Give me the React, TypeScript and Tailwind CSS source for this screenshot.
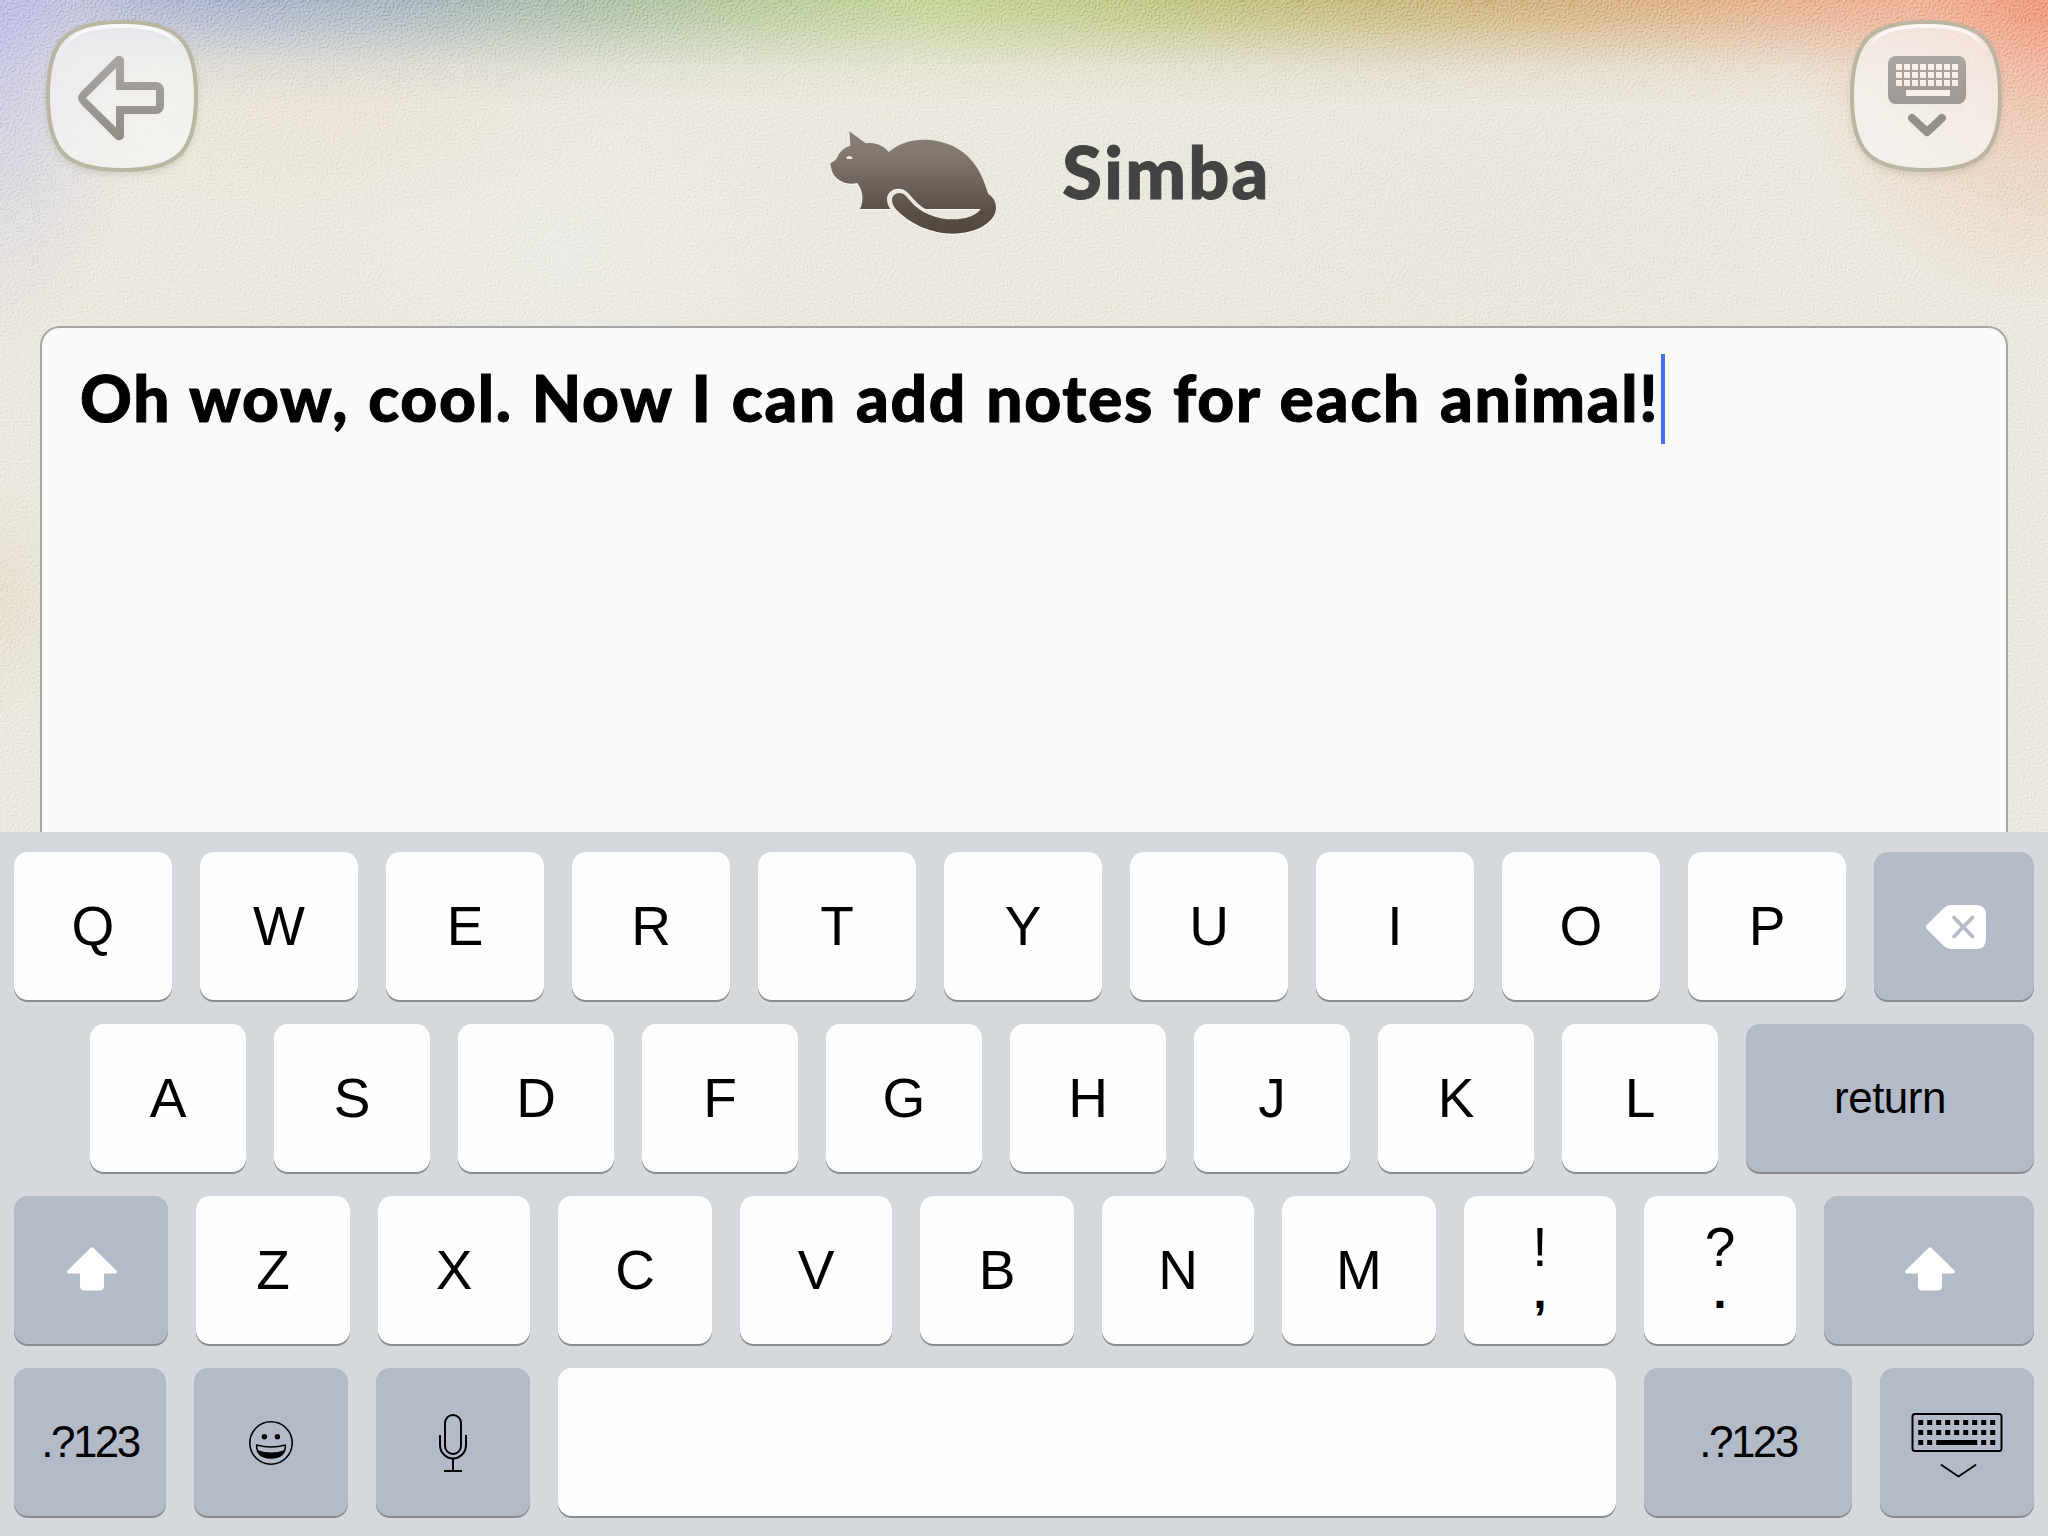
import React from 'react';

type IconProps = { className?: string };

const SQUIRCLE = 'M2 76 C2 20 20 2 76 2 C132 2 150 20 150 76 C150 132 132 150 76 150 C20 150 2 132 2 76 Z';

const PaperBackground: React.FC = () => (
  <div className="absolute inset-0 -z-10 overflow-hidden bg-[#ebe8de]">
    <div className="absolute inset-0 bg-[radial-gradient(ellipse_300px_120px_at_330px_100px,#eae4d7,transparent),radial-gradient(ellipse_260px_200px_at_560px_250px,#ecebe5,transparent),radial-gradient(ellipse_500px_300px_at_1500px_230px,#e9e6dc,transparent),radial-gradient(ellipse_80px_120px_at_0px_600px,#e6dfcf,transparent)]" />
    <div className="absolute inset-x-0 top-0 h-[150px] bg-[linear-gradient(90deg,#b3b4dd_0px,#a0acce_220px,#9caebb_400px,#a0b89f_580px,#b0c690_760px,#bdd18b_920px,#b8be70_1180px,#c2b06c_1380px,#d2a76d_1580px,#e5a880_1780px,#ee9a80_1980px,#ee9a80_2048px)] [mask-image:linear-gradient(rgba(0,0,0,.82)_0px,rgba(0,0,0,.64)_22px,rgba(0,0,0,.4)_42px,rgba(0,0,0,.14)_66px,transparent_104px)]" />
    <div className="absolute inset-0 bg-[radial-gradient(ellipse_150px_330px_at_0px_30px,rgba(190,190,232,.75),rgba(208,207,226,.4)_55%,transparent)]" />
    <div className="absolute inset-0 bg-[radial-gradient(ellipse_260px_300px_at_2048px_10px,rgba(242,150,122,.7),rgba(240,190,160,.42)_50%,transparent)]" />
    <svg className="absolute inset-0 h-full w-full opacity-60 mix-blend-soft-light">
      <filter id="paper" x="0" y="0" width="100%" height="100%" colorInterpolationFilters="sRGB">
        <feTurbulence type="fractalNoise" baseFrequency="0.5" numOctaves="3" seed="7" />
        <feDiffuseLighting surfaceScale="1.6" lightingColor="#ffffff">
          <feDistantLight azimuth="225" elevation="33" />
        </feDiffuseLighting>
      </filter>
      <rect width="100%" height="100%" filter="url(#paper)" />
    </svg>
  </div>
);

const RoundButton: React.FC<{ label: string; children: React.ReactNode }> = ({ label, children }) => (
  <button type="button" aria-label={label} className="size-[152px]">
    <svg viewBox="0 0 152 152" className="size-full overflow-visible drop-shadow-[0_3px_3px_rgba(90,80,60,.16)]">
      <defs>
        <linearGradient id="glyph" x1="0" y1="36" x2="0" y2="120" gradientUnits="userSpaceOnUse">
          <stop offset="0" stopColor="#ada7a4" />
          <stop offset="1" stopColor="#928c87" />
        </linearGradient>
      </defs>
      <path d={SQUIRCLE} fill="#fff" fillOpacity=".66" stroke="#bab6a1" strokeWidth="4" />
      <path d="M17 30 C26 10 44 4 76 4 C108 4 126 10 135 30 C124 13 106 8 76 8 C46 8 28 13 17 30 Z" fill="#fff" fillOpacity=".7" />
      {children}
    </svg>
  </button>
);

const BackGlyph = () => (
  <path
    fill="url(#glyph)"
    fillRule="evenodd"
    d="M35.3 71.4 L69.5 37.2 A5 5 0 0 1 78 41 V62 H110 A8 8 0 0 1 118 70 V86 A8 8 0 0 1 110 94 H78 V115 A5 5 0 0 1 69.5 118.8 L35.3 84.6 Q28.7 78 35.3 71.4 Z M40 78 L70 107.5 V86 H110 V70 H70 V48 Z"
  />
);

const DismissGlyph = () => (
  <g>
    <rect x="38" y="36" width="78" height="48" rx="8" fill="url(#glyph)" />
    {[44, 52, 60].map(y =>
      [0, 1, 2, 3, 4, 5, 6, 7].map(i => <rect key={`${y}-${i}`} x={46 + i * 8} y={y} width="6" height="6" fill="#f8f1e9" />)
    )}
    <rect x="56" y="70" width="44" height="6" fill="#f8f1e9" />
    <path d="M62 98 L77 112 L92 98" fill="none" stroke="#958f8a" strokeWidth="8" strokeLinecap="round" strokeLinejoin="round" />
  </g>
);

const CatIcon: React.FC<IconProps> = ({ className }) => (
  <svg viewBox="84 60 510 318" className={className}>
    <defs>
      <linearGradient id="fur" x1="0" y1="64" x2="0" y2="371" gradientUnits="userSpaceOnUse">
        <stop offset="0" stopColor="#897f76" />
        <stop offset=".25" stopColor="#81776e" />
        <stop offset=".8" stopColor="#594e46" />
        <stop offset="1" stopColor="#51473f" />
      </linearGradient>
    </defs>
    <path
      fill="url(#fur)"
      d="M148 64 L197 100 C226 95 250 106 266 126 C298 99 335 89 370 89 C440 89 500 120 532 175 C552 208 558 235 565 252 C580 262 588 275 588 294 C588 335 530 371 458 371 C395 371 335 343 297 307 C283 294 276 283 276 270 C276 258 285 249 298 249 C312 249 319 259 330 272 C362 310 410 328 458 328 C500 328 530 315 542 297 L376 297 C352 285 337 262 325 250 C315 239 306 236 296 236 C275 236 261 251 261 268 C261 280 265 288 271 297 L180 297 C191 275 191 245 172 219 C158 222 140 222 127 215 C104 205 94 190 91 160 C101 155 108 152 112 142 C120 122 135 112 151 107 Z"
    />
    <path fill="#f3f0e8" d="M138 143 Q143 137 150 138 Q157 139 158 147 H141 Q142 143 138 143 Z" />
  </svg>
);

const DeleteIcon = () => (
  <svg viewBox="0 0 60 44" className="mt-0.5 ml-1 h-11 w-[60px]">
    <path fill="#fff" d="M0.8 20 L18 3 Q21 0 25 0 H50 Q60 0 60 10 V34 Q60 44 50 44 H25 Q21 44 18 41 L0.8 24 Q-0.8 22 0.8 20 Z" />
    <path d="M28 12.5 L46.5 31.5 M46.5 12.5 L28 31.5" stroke="#b4bbc8" strokeWidth="3.8" strokeLinecap="round" />
  </svg>
);

const ShiftIcon = () => (
  <svg viewBox="0 0 50 44" className="mb-0.5 ml-0.5 h-11 w-[50px]">
    <path fill="#fff" d="M23.5 1 Q25 -0.6 26.5 1 L49.4 23.4 Q51 26 48 26.6 H37 V39 Q37 43.5 32.5 43.5 H17.5 Q13 43.5 13 39 V26.6 H2 Q-1 26 0.6 23.4 Z" />
  </svg>
);

const EmojiIcon = () => (
  <svg viewBox="0 0 44 44" className="mt-0.5 size-11">
    <circle cx="22" cy="22" r="21.2" fill="none" stroke="#000" strokeWidth="1.6" />
    <circle cx="15.4" cy="15.7" r="2.7" />
    <circle cx="28.4" cy="15.7" r="2.7" />
    <path d="M7.6 24 Q22 28 36.4 24 Q36.6 36.8 22 36.8 Q7.4 36.8 7.6 24 Z" fill="none" stroke="#000" strokeWidth="1.6" strokeLinejoin="round" />
    <path d="M8.5 29 Q22 34 35.5 29 Q32 37.4 22 37.4 Q12 37.4 8.5 29 Z" />
  </svg>
);

const MicIcon = () => (
  <svg viewBox="0 0 28 58" className="mt-0.5 h-[58px] w-7" fill="none" stroke="#000" strokeWidth="2">
    <rect x="6" y="1" width="16" height="39" rx="8" />
    <path d="M1 21 V31 A13 13.5 0 0 0 27 31 V21 M14 45 V57 M5 57 H23" />
  </svg>
);

const HideKeyboardIcon = () => (
  <svg viewBox="0 0 92 66" className="mt-2 h-[66px] w-[92px]">
    <rect x="1.5" y="1" width="89" height="37" rx="2.5" fill="none" stroke="#000" strokeWidth="2" />
    {[0, 1, 2, 3, 4, 5, 6, 7, 8].map(i => (
      <g key={i}>
        <rect x={7.2 + i * 9} y="7" width="5" height="5" />
        <rect x={7.2 + i * 9} y="17" width="5" height="5" />
        {(i < 2 || i > 6) && <rect x={7.2 + i * 9} y="27" width="5" height="5" />}
      </g>
    ))}
    <rect x="25.2" y="27" width="41" height="5" />
    <path d="M30.5 52 L47.5 63.5 L64.5 52" fill="none" stroke="#000" strokeWidth="1.8" strokeLinecap="round" strokeLinejoin="round" />
  </svg>
);

interface KeyProps {
  width: string;
  dark?: boolean;
  small?: boolean;
  children?: React.ReactNode;
}

const Key: React.FC<KeyProps> = ({ width, dark, small, children }) => (
  <button
    type="button"
    className={`flex h-[148px] shrink-0 items-center justify-center rounded-[14px] leading-none text-black shadow-[0_2px_0_#8a8c90] ${width} ${dark ? 'bg-[#b4bbc8]' : 'bg-[#fdfefe]'} ${small ? 'text-[44px]' : 'text-[55px]'}`}
  >
    {children}
  </button>
);

const DoubleLabel: React.FC<{ top: string; bottom: string }> = ({ top, bottom }) => (
  <span className="flex flex-col items-center">
    <span className="h-[43px] leading-[41px]">{top}</span>
    <span className="h-[43px] text-[48px] leading-[44px] font-bold">{bottom}</span>
  </span>
);

const Keyboard: React.FC = () => (
  <div className="flex h-[704px] flex-col gap-6 bg-[#d5d8dd] px-[14px] pt-5 font-['Liberation_Sans',Arial,sans-serif]">
    <div className="flex gap-7">
      {'QWERTYUIOP'.split('').map(k => <Key key={k} width="w-[158px]">{k}</Key>)}
      <Key width="w-[160px]" dark><DeleteIcon /></Key>
    </div>
    <div className="flex gap-7 pl-[76px]">
      {'ASDFGHJKL'.split('').map(k => <Key key={k} width="w-[156px]">{k}</Key>)}
      <Key width="w-[288px]" dark small><span className="tracking-[-0.5px]">return</span></Key>
    </div>
    <div className="flex gap-7">
      <Key width="w-[154px]" dark><ShiftIcon /></Key>
      {'ZXCVBNM'.split('').map((k, i) => <Key key={k} width={i % 2 ? 'w-[152px]' : 'w-[154px]'}>{k}</Key>)}
      <Key width="w-[152px]"><DoubleLabel top="!" bottom="," /></Key>
      <Key width="w-[152px]"><DoubleLabel top="?" bottom="." /></Key>
      <Key width="w-[210px]" dark><ShiftIcon /></Key>
    </div>
    <div className="flex gap-7">
      <Key width="w-[152px]" dark small><span className="tracking-[-2.5px]">.?123</span></Key>
      <Key width="w-[154px]" dark><EmojiIcon /></Key>
      <Key width="w-[154px]" dark><MicIcon /></Key>
      <Key width="w-[1058px]" />
      <Key width="w-[208px]" dark small><span className="tracking-[-2.5px]">.?123</span></Key>
      <Key width="w-[154px]" dark><HideKeyboardIcon /></Key>
    </div>
  </div>
);

const App: React.FC = () => (
  <div className="relative isolate flex h-[1536px] w-[2048px] flex-col overflow-hidden font-['Lato',sans-serif]">
    <PaperBackground />

    <header className="flex h-[326px] shrink-0 items-start justify-between px-[46px] pt-5">
      <RoundButton label="Back"><BackGlyph /></RoundButton>
      <div className="flex items-start pl-[51px] pt-[110px]">
        <CatIcon className="h-[106px] w-[170px] drop-shadow-[0_1px_0_rgba(255,255,255,.8)]" />
        <h1 className="ml-16 text-[72px] leading-[83px] font-black tracking-[2.3px] text-[#434343] [-webkit-text-stroke:1px_#434343]">Simba</h1>
      </div>
      <RoundButton label="Dismiss keyboard"><DismissGlyph /></RoundButton>
    </header>

    <main className="mx-10 flex h-[506px] shrink-0 items-start rounded-t-[20px] border-2 border-b-0 border-[#a5a6a6] bg-[#fafaf8] pl-[38px] pt-[26px]">
      <p className="h-[90px] text-[64px] leading-[87px] font-black tracking-[1.75px] whitespace-nowrap text-black [-webkit-text-stroke:1px_#000] [word-spacing:2.1px]">Oh wow, cool. Now I can add notes for each animal!</p>
      <span className="ml-0.5 h-[90px] w-1 bg-[#456ff0]" />
    </main>

    <Keyboard />
  </div>
);

export default App;
